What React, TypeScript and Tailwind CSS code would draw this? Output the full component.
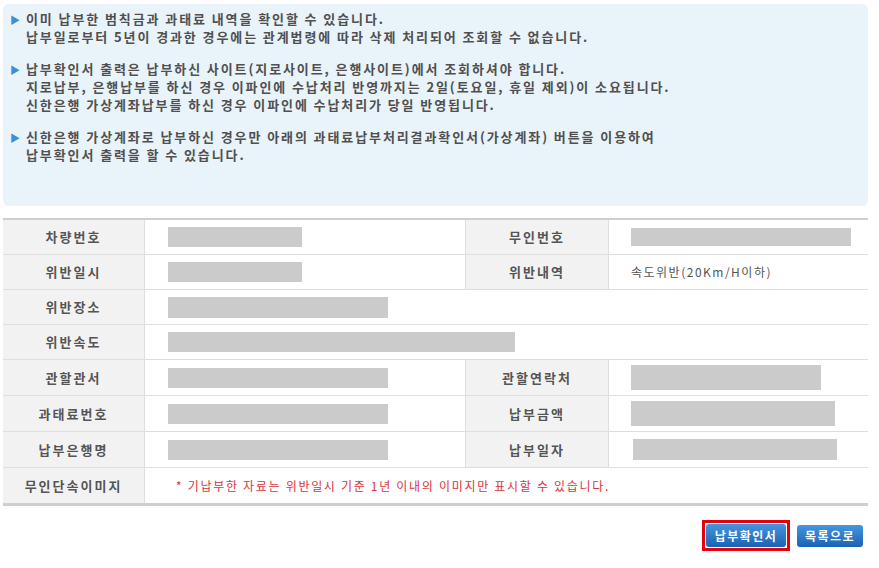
import React from 'react';

const font = { fontFamily: '"Noto Sans CJK KR", "Noto Sans", sans-serif' };

const notices = [
  [
    '이미 납부한 범칙금과 과태료 내역을 확인할 수 있습니다.',
    '납부일로부터 5년이 경과한 경우에는 관계법령에 따라 삭제 처리되어 조회할 수 없습니다.',
  ],
  [
    '납부확인서 출력은 납부하신 사이트(지로사이트, 은행사이트)에서 조회하셔야 합니다.',
    '지로납부, 은행납부를 하신 경우 이파인에 수납처리 반영까지는 2일(토요일, 휴일 제외)이 소요됩니다.',
    '신한은행 가상계좌납부를 하신 경우 이파인에 수납처리가 당일 반영됩니다.',
  ],
  [
    '신한은행 가상계좌로 납부하신 경우만 아래의 과태료납부처리결과확인서(가상계좌) 버튼을 이용하여',
    '납부확인서 출력을 할 수 있습니다.',
  ],
];

function Bar({ w, h = 'h-[20px]' }: { w: string; h?: string }) {
  return <div className={`${w} ${h} bg-[#cbcbcb]`} />;
}

function Label({ children }: { children: React.ReactNode }) {
  return (
    <div className="flex items-center justify-center bg-[#f2f2f2] text-[13px] font-bold tracking-[2px] text-[#555]">
      {children}
    </div>
  );
}

function SideLabel({ children }: { children: React.ReactNode }) {
  return (
    <div className="border-l border-[#dedede]">
      <div className="flex h-full items-center justify-center bg-[#f2f2f2] text-[13px] font-bold tracking-[2px] text-[#555]">
        {children}
      </div>
    </div>
  );
}

export default function App() {
  return (
    <div className="min-h-screen bg-white px-[3px] pt-[4px]" style={font}>
      <div className="w-[865px]">
        {/* notice box */}
        <div className="h-[202px] rounded-[6px] bg-[#e8f3fa] pl-[7px] pt-[6px]">
          {notices.map((group, i) => (
            <div key={i} className="mb-[14px] flex">
              <span className="w-[16px] pt-[1px] text-[10px] leading-[18px] text-[#3b8ed8]">▶</span>
              <div className="text-[13px] font-bold leading-[18px] tracking-[1.9px] text-[#505050]">
                {group.map((line) => (
                  <div key={line}>{line}</div>
                ))}
              </div>
            </div>
          ))}
        </div>

        {/* detail table */}
        <div className="mt-[12px] border-t-2 border-b-[3px] border-[#cfcfcf]">
          <div className="grid h-[35px] grid-cols-[141px_321px_143px_1fr] border-b border-[#dedede]">
            <Label>차량번호</Label>
            <div className="flex items-center border-l border-[#dedede] pl-[23px]">
              <Bar w="w-[134px]" />
            </div>
            <SideLabel>무인번호</SideLabel>
            <div className="flex items-center border-l border-[#dedede] pl-[22px]">
              <Bar w="w-[220px]" h="h-[18px]" />
            </div>
          </div>
          <div className="grid h-[35px] grid-cols-[141px_321px_143px_1fr] border-b border-[#dedede]">
            <Label>위반일시</Label>
            <div className="flex items-center border-l border-[#dedede] pl-[23px]">
              <Bar w="w-[134px]" />
            </div>
            <SideLabel>위반내역</SideLabel>
            <div className="flex items-center border-l border-[#dedede] pl-[22px] text-[12px] tracking-[1.5px] text-[#555]">
              속도위반(20Km/H이하)
            </div>
          </div>
          <div className="grid h-[35px] grid-cols-[141px_1fr] border-b border-[#dedede]">
            <Label>위반장소</Label>
            <div className="flex items-center border-l border-[#dedede] pl-[23px]">
              <Bar w="w-[220px]" h="h-[21px]" />
            </div>
          </div>
          <div className="grid h-[35px] grid-cols-[141px_1fr] border-b border-[#dedede]">
            <Label>위반속도</Label>
            <div className="flex items-center border-l border-[#dedede] pl-[23px]">
              <Bar w="w-[347px]" />
            </div>
          </div>
          <div className="grid h-[36px] grid-cols-[141px_321px_143px_1fr] border-b border-[#dedede]">
            <Label>관할관서</Label>
            <div className="flex items-center border-l border-[#dedede] pl-[23px]">
              <Bar w="w-[220px]" />
            </div>
            <SideLabel>관할연락처</SideLabel>
            <div className="flex items-center border-l border-[#dedede] pl-[22px]">
              <Bar w="w-[190px]" h="h-[25px]" />
            </div>
          </div>
          <div className="grid h-[36px] grid-cols-[141px_321px_143px_1fr] border-b border-[#dedede]">
            <Label>과태료번호</Label>
            <div className="flex items-center border-l border-[#dedede] pl-[23px]">
              <Bar w="w-[220px]" />
            </div>
            <SideLabel>납부금액</SideLabel>
            <div className="flex items-center border-l border-[#dedede] pl-[22px]">
              <Bar w="w-[204px]" h="h-[25px]" />
            </div>
          </div>
          <div className="grid h-[36px] grid-cols-[141px_321px_143px_1fr] border-b border-[#dedede]">
            <Label>납부은행명</Label>
            <div className="flex items-center border-l border-[#dedede] pl-[23px]">
              <Bar w="w-[220px]" />
            </div>
            <SideLabel>납부일자</SideLabel>
            <div className="flex items-center border-l border-[#dedede] pl-[24px]">
              <Bar w="w-[204px]" h="h-[21px]" />
            </div>
          </div>
          <div className="grid h-[35px] grid-cols-[141px_1fr]">
            <Label>무인단속이미지</Label>
            <div className="flex items-center border-l border-[#dedede] pl-[31px] text-[12px] tracking-[1.7px] text-[#d8343c]">
              * 기납부한 자료는 위반일시 기준 1년 이내의 이미지만 표시할 수 있습니다.
            </div>
          </div>
        </div>

        {/* buttons */}
        <div className="mt-[14px] flex items-center justify-end gap-[7px] pr-[5px]">
          <span className="border-[3px] border-[#e3000f] p-[1px]">
            <button className="flex h-[23px] w-[80px] items-center justify-center rounded-[3px] bg-gradient-to-b from-[#4596df] to-[#1b62b3] text-[12px] font-bold tracking-[1.5px] text-white">
              납부확인서
            </button>
          </span>
          <button className="flex h-[22px] w-[66px] items-center justify-center rounded-[3px] bg-gradient-to-b from-[#4596df] to-[#1b62b3] text-[12px] font-bold tracking-[1.5px] text-white">
            목록으로
          </button>
        </div>
      </div>
    </div>
  );
}
